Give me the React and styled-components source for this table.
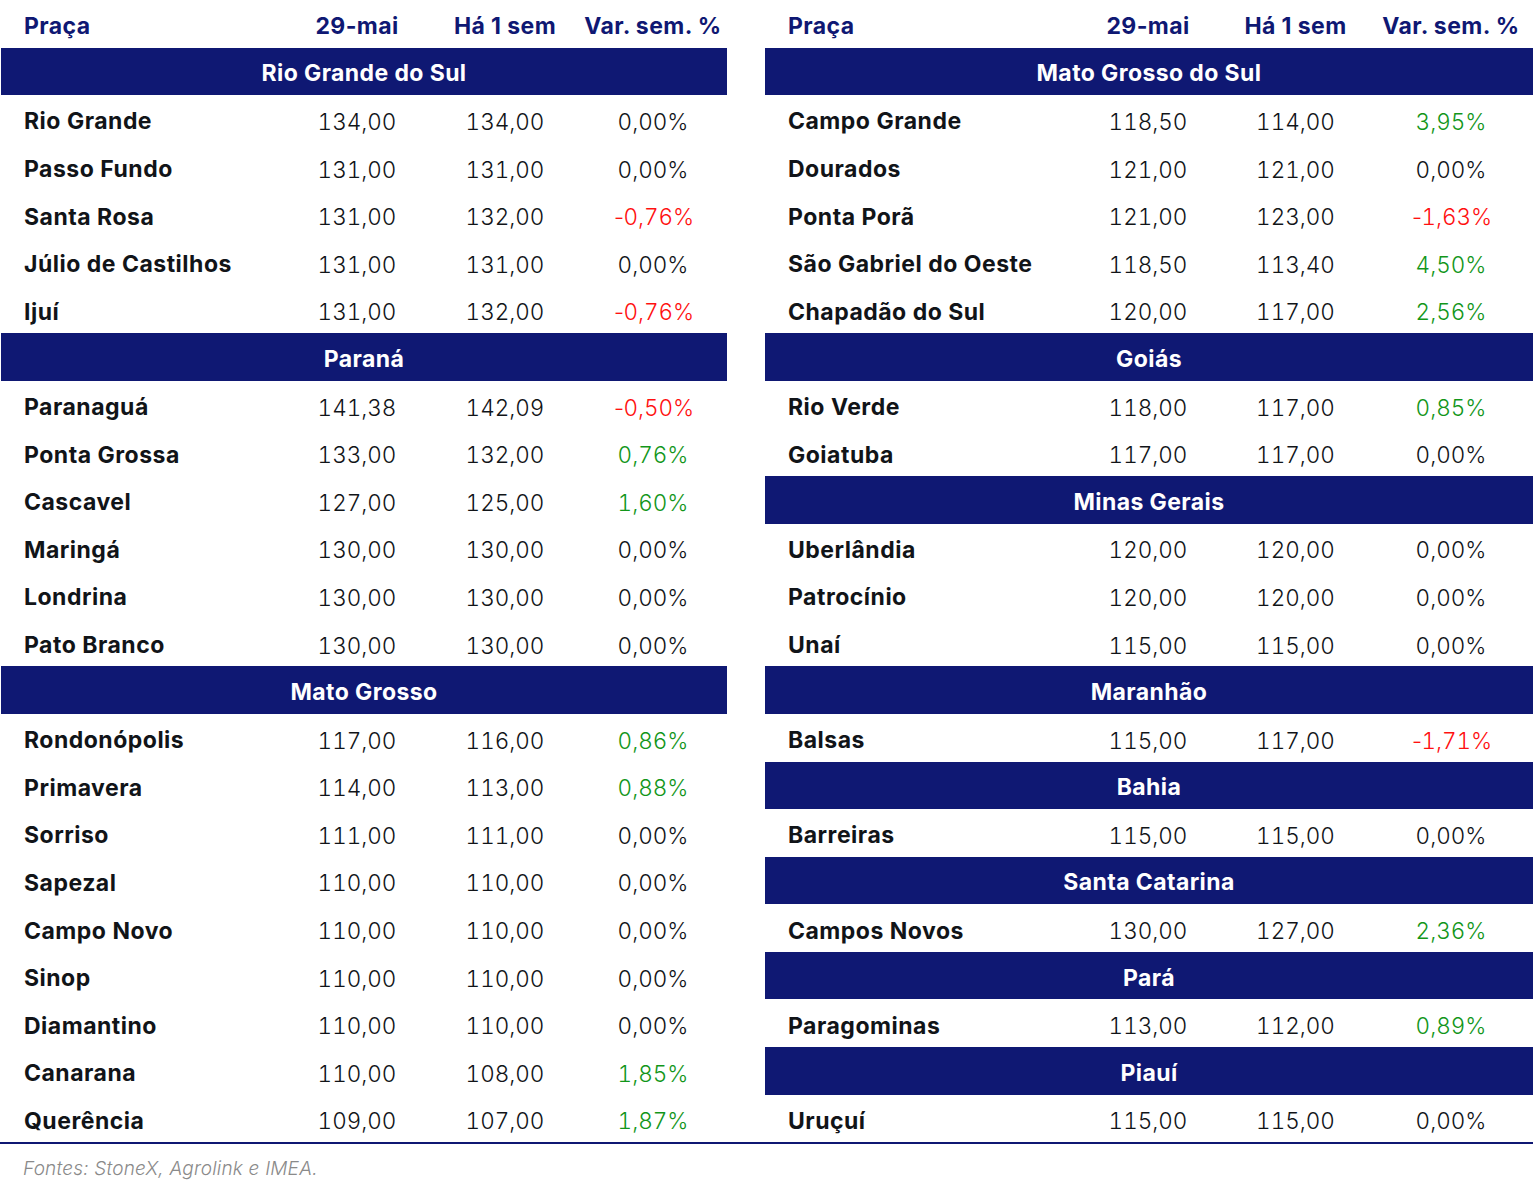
import React from "react";
import styled, { createGlobalStyle } from "styled-components";

const NAVY = "#0f1873";

const GlobalStyle = createGlobalStyle`
    body {
        margin: 0;
        background: #ffffff;
        font-family: Inter, "Noto Sans", sans-serif;
    }
`;

const Page = styled.div`
    width: 1534px;
    display: flex;
    flex-direction: column;
`;

const Tables = styled.div`
    display: flex;
    gap: 38px;
    padding-left: 1px;
`;

const Table = styled.div`
    display: grid;
    grid-template-columns: ${props => props.cols};
    grid-auto-rows: 47.6px;
`;

const HeadCell = styled.div`
    display: flex;
    align-items: center;
    justify-content: ${props => props.left ? "flex-start" : "center"};
    padding-left: ${props => props.left ? "23px" : "0"};
    padding-top: 4px;
    color: ${NAVY};
    font-size: 23px;
    font-weight: 700;
    letter-spacing: 0.4px;
    white-space: nowrap;
`;

const Band = styled.div`
    grid-column: 1 / -1;
    background: ${NAVY};
    color: #ffffff;
    display: flex;
    align-items: center;
    justify-content: center;
    padding-top: 4px;
    font-size: 23px;
    font-weight: 700;
    letter-spacing: 0.4px;
`;

const NameCell = styled.div`
    display: flex;
    align-items: center;
    padding-left: 23px;
    padding-top: 5px;
    color: #111418;
    font-size: 23px;
    font-weight: 700;
    letter-spacing: 0.5px;
    white-space: nowrap;
`;

const NumCell = styled.div`
    display: flex;
    align-items: center;
    justify-content: center;
    padding-top: 5px;
    color: ${props => props.tone === "up" ? "#12961a" : props.tone === "down" ? "#ff1010" : "#111418"};
    font-size: 22.5px;
    font-weight: 300;
    font-variant-numeric: tabular-nums;
    white-space: nowrap;
`;

const Minus = styled.span`
    margin-right: -3px;
`;

const Rule = styled.div`
    height: 2px;
    width: 1533px;
    background: ${NAVY};
`;

const Footer = styled.div`
    padding: 13px 0 0 23px;
    color: #8a8a8a;
    font-size: 19px;
    font-style: italic;
    font-weight: 300;
    letter-spacing: 0.2px;
`;

const left = [
    ["Rio Grande do Sul", [
        ["Rio Grande", "134,00", "134,00", "0,00%"],
        ["Passo Fundo", "131,00", "131,00", "0,00%"],
        ["Santa Rosa", "131,00", "132,00", "-0,76%"],
        ["Júlio de Castilhos", "131,00", "131,00", "0,00%"],
        ["Ijuí", "131,00", "132,00", "-0,76%"],
    ]],
    ["Paraná", [
        ["Paranaguá", "141,38", "142,09", "-0,50%"],
        ["Ponta Grossa", "133,00", "132,00", "0,76%"],
        ["Cascavel", "127,00", "125,00", "1,60%"],
        ["Maringá", "130,00", "130,00", "0,00%"],
        ["Londrina", "130,00", "130,00", "0,00%"],
        ["Pato Branco", "130,00", "130,00", "0,00%"],
    ]],
    ["Mato Grosso", [
        ["Rondonópolis", "117,00", "116,00", "0,86%"],
        ["Primavera", "114,00", "113,00", "0,88%"],
        ["Sorriso", "111,00", "111,00", "0,00%"],
        ["Sapezal", "110,00", "110,00", "0,00%"],
        ["Campo Novo", "110,00", "110,00", "0,00%"],
        ["Sinop", "110,00", "110,00", "0,00%"],
        ["Diamantino", "110,00", "110,00", "0,00%"],
        ["Canarana", "110,00", "108,00", "1,85%"],
        ["Querência", "109,00", "107,00", "1,87%"],
    ]],
];

const right = [
    ["Mato Grosso do Sul", [
        ["Campo Grande", "118,50", "114,00", "3,95%"],
        ["Dourados", "121,00", "121,00", "0,00%"],
        ["Ponta Porã", "121,00", "123,00", "-1,63%"],
        ["São Gabriel do Oeste", "118,50", "113,40", "4,50%"],
        ["Chapadão do Sul", "120,00", "117,00", "2,56%"],
    ]],
    ["Goiás", [
        ["Rio Verde", "118,00", "117,00", "0,85%"],
        ["Goiatuba", "117,00", "117,00", "0,00%"],
    ]],
    ["Minas Gerais", [
        ["Uberlândia", "120,00", "120,00", "0,00%"],
        ["Patrocínio", "120,00", "120,00", "0,00%"],
        ["Unaí", "115,00", "115,00", "0,00%"],
    ]],
    ["Maranhão", [["Balsas", "115,00", "117,00", "-1,71%"]]],
    ["Bahia", [["Barreiras", "115,00", "115,00", "0,00%"]]],
    ["Santa Catarina", [["Campos Novos", "130,00", "127,00", "2,36%"]]],
    ["Pará", [["Paragominas", "113,00", "112,00", "0,89%"]]],
    ["Piauí", [["Uruçuí", "115,00", "115,00", "0,00%"]]],
];

const toneOf = (v) => {
    if (v.startsWith("-")) return "down";
    if (v === "0,00%") return "flat";
    return "up";
};

const Value = ({ v }) => (
    v.startsWith("-") ? <><Minus>-</Minus>{v.slice(1)}</> : v
);

const PriceTable = ({ cols, groups }) => (
    <Table cols={cols}>
        <HeadCell left>Praça</HeadCell>
        <HeadCell>29-mai</HeadCell>
        <HeadCell>Há 1 sem</HeadCell>
        <HeadCell>Var. sem. %</HeadCell>
        {groups.map(([state, rows]) => (
            <React.Fragment key={state}>
                <Band>{state}</Band>
                {rows.map(([name, now, week, vari]) => (
                    <React.Fragment key={name}>
                        <NameCell>{name}</NameCell>
                        <NumCell>{now}</NumCell>
                        <NumCell>{week}</NumCell>
                        <NumCell tone={toneOf(vari)}><Value v={vari} /></NumCell>
                    </React.Fragment>
                ))}
            </React.Fragment>
        ))}
    </Table>
);

const App = () => (
    <Page>
        <GlobalStyle />
        <Tables>
            <PriceTable cols="282px 148px 148px 148px" groups={left} />
            <PriceTable cols="309px 148px 147px 164px" groups={right} />
        </Tables>
        <Rule />
        <Footer>Fontes: StoneX, Agrolink e IMEA.</Footer>
    </Page>
);

export default App;
